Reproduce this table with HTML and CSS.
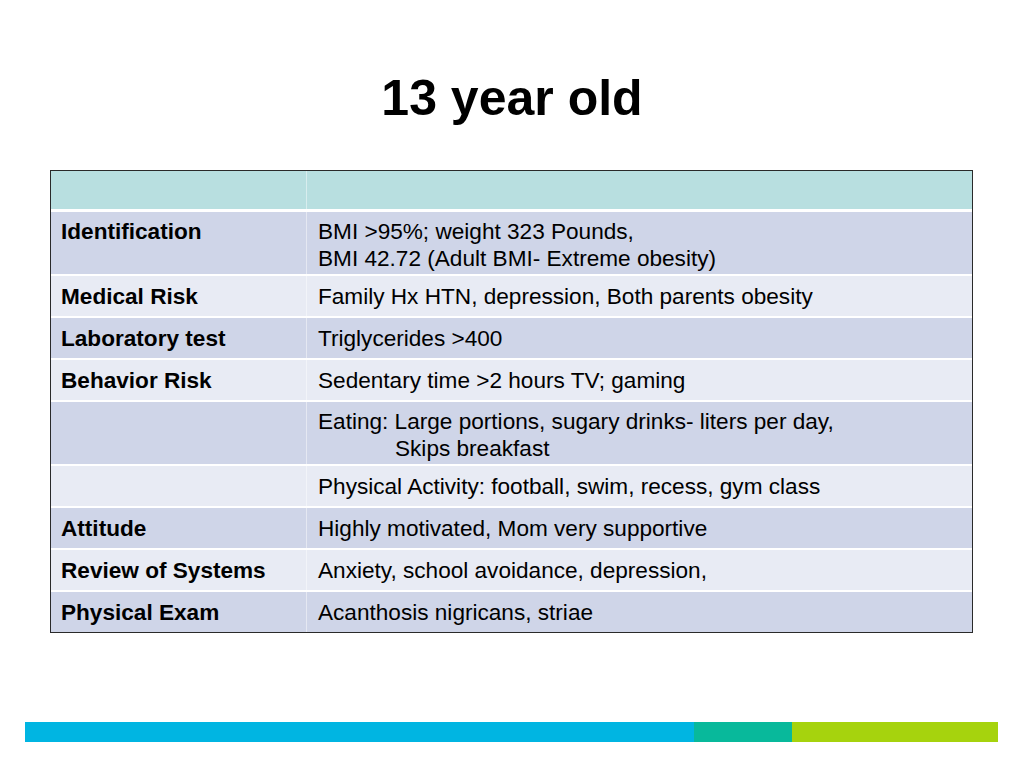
FILE: index.html
```html
<!DOCTYPE html>
<html lang="en">
<head>
<meta charset="utf-8">
<title>13 year old</title>
<link rel="stylesheet" href="styles.css">
</head>
<body>
<div class="slide">
  <h1 class="title">13 year old</h1>
  <div class="table">
    <div class="row head"><div class="c1"></div><div class="c2"></div></div>
    <div class="row dark two"><div class="c1">Identification</div><div class="c2">BMI &gt;95%; weight 323 Pounds,<br>BMI 42.72 (Adult BMI- Extreme obesity)</div></div>
    <div class="row light"><div class="c1">Medical Risk</div><div class="c2">Family Hx HTN, depression, Both parents obesity</div></div>
    <div class="row dark"><div class="c1">Laboratory test</div><div class="c2">Triglycerides &gt;400</div></div>
    <div class="row light"><div class="c1">Behavior Risk</div><div class="c2">Sedentary time &gt;2 hours TV; gaming</div></div>
    <div class="row dark two"><div class="c1"></div><div class="c2">Eating: Large portions, sugary drinks- liters per day,<br><span class="indent">Skips breakfast</span></div></div>
    <div class="row light"><div class="c1"></div><div class="c2">Physical Activity: football, swim, recess, gym class</div></div>
    <div class="row dark"><div class="c1">Attitude</div><div class="c2">Highly motivated, Mom very supportive</div></div>
    <div class="row light"><div class="c1">Review of Systems</div><div class="c2">Anxiety, school avoidance, depression,</div></div>
    <div class="row dark"><div class="c1">Physical Exam</div><div class="c2">Acanthosis nigricans, striae</div></div>
  </div>
  <div class="bar">
    <div class="seg blue"></div>
    <div class="seg teal"></div>
    <div class="seg green"></div>
  </div>
</div>
</body>
</html>
```
FILE: styles.css
```css
html, body {
  margin: 0;
  padding: 0;
  background: #ffffff;
}
.slide {
  width: 1024px;
  height: 768px;
  display: flex;
  flex-direction: column;
  font-family: "Liberation Sans", Arial, sans-serif;
  color: #000;
}
.title {
  margin: 68px 0 0 0;
  font-size: 50px;
  line-height: 60px;
  font-weight: bold;
  text-align: center;
}
.table {
  margin: 42px 0 0 50px;
  width: 923px;
  box-sizing: border-box;
  border: 1.5px solid #2a2a2a;
  background: #ffffff;
  display: flex;
  flex-direction: column;
  gap: 2px;
}
.row {
  display: grid;
  grid-template-columns: 255px 1fr;
  font-size: 22.6px;
  line-height: 27px;
}
.row > div {
  padding: 6.5px 0 6.5px 10px;
  min-height: 27px;
}
.row > .c1 {
  font-weight: bold;
}
.row > .c2 {
  padding-left: 11px;
  border-left: 1px solid rgba(255,255,255,0.45);
}
.row.two > div {
  padding-top: 6px;
  padding-bottom: 2px;
}
.row.head {
  margin-bottom: 1px;
}
.row.head > div {
  min-height: 25px;
  background: #b8dfe0;
}
.row.dark > div {
  background: #cfd5e8;
}
.row.light > div {
  background: #e8ebf4;
}
.indent {
  padding-left: 77px;
}
.bar {
  margin: 89px 0 0 25px;
  width: 973px;
  height: 20px;
  display: flex;
}
.seg {
  height: 100%;
}
.blue {
  width: 669px;
  background: #00b5e2;
}
.teal {
  width: 98px;
  background: #08b99b;
}
.green {
  flex: 1;
  background: #a6d30d;
}
```
